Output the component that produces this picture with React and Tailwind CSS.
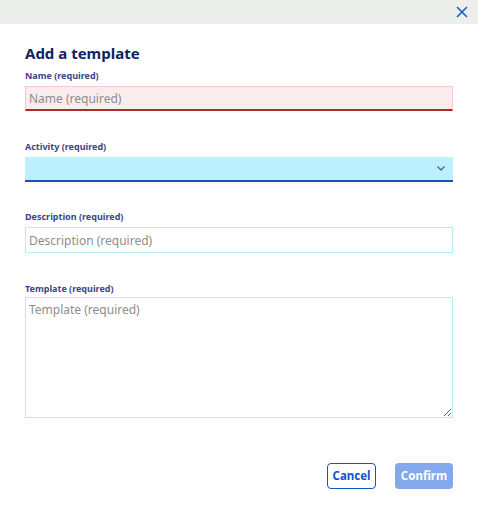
import React from 'react';

export default function App() {
    return (
        <div className="w-[478px] h-[505px] bg-white" style={{ fontFamily: '"Noto Sans", "Open Sans", sans-serif' }}>
            {/* Top bar */}
            <div className="h-[24px] bg-[#eceeec] flex items-center justify-end pr-[10px]">
                <svg width="12" height="12" viewBox="0 0 12 12" className="text-[#1a5ccf]">
                    <path d="M1 1L11 11M11 1L1 11" stroke="currentColor" strokeWidth="1.6" fill="none" />
                </svg>
            </div>

            <div className="px-[25px]">
                <h2 className="mt-[19px] text-[15px] leading-[20px] font-bold text-[#0d2463]">Add a template</h2>

                {/* Name */}
                <label className="block mt-[7px] text-[9px] leading-[12px] font-bold text-[#3d4585]">Name (required)</label>
                <input
                    placeholder="Name (required)"
                    className="mt-[4px] block w-full h-[25px] px-[3px] text-[12px] bg-[#f9ecec] border border-[#f7c9cf] border-b-2 border-b-[#b02a2a] outline-none placeholder:text-[#8d8d8d]"
                />

                {/* Activity */}
                <label className="block mt-[30px] text-[9px] leading-[12px] font-bold text-[#3d4585]">Activity (required)</label>
                <div className="mt-[4px] h-[25px] bg-[#bdf0fd] border-b-2 border-[#1d4fb5] flex items-center justify-end pr-[8px]">
                    <svg width="8" height="5" viewBox="0 0 8 5">
                        <path d="M0.5 0.5L4 4L7.5 0.5" stroke="#4a4f8a" strokeWidth="1.1" fill="none" />
                    </svg>
                </div>

                {/* Description */}
                <label className="block mt-[29px] text-[9px] leading-[12px] font-bold text-[#3d4585]">Description (required)</label>
                <input
                    placeholder="Description (required)"
                    className="mt-[4px] block w-full h-[26px] px-[3px] text-[12px] bg-white border border-[#b5ecf5] outline-none placeholder:text-[#8d8d8d]"
                />

                {/* Template */}
                <label className="block mt-[30px] text-[9px] leading-[12px] font-bold text-[#3d4585]">Template (required)</label>
                <textarea
                    placeholder="Template (required)"
                    className="mt-[2px] block w-full h-[121px] px-[3px] py-[3px] text-[12px] bg-white border border-[#b5ecf5] outline-none placeholder:text-[#8d8d8d]"
                />

                {/* Buttons */}
                <div className="mt-[45px] flex justify-end gap-[19px]">
                    <button className="h-[26px] w-[49px] rounded-[4px] border border-[#1550c8] text-[#1550c8] text-[11.5px] font-bold bg-white">
                        Cancel
                    </button>
                    <button className="h-[26px] w-[58px] rounded-[4px] bg-[#84a8ec] text-white text-[11.5px] font-bold">
                        Confirm
                    </button>
                </div>
            </div>
        </div>
    );
}
